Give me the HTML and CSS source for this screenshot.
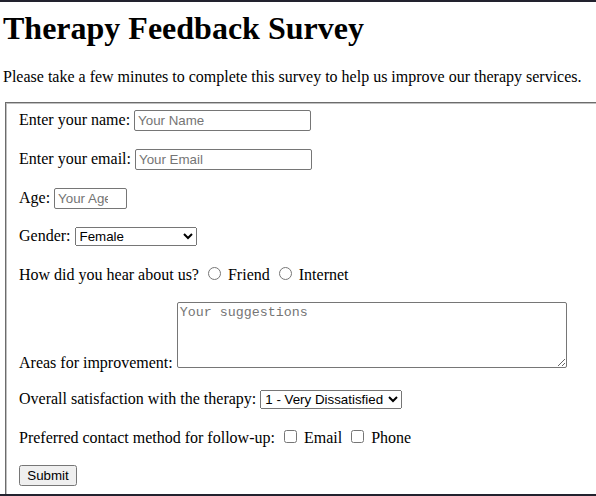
FILE: index.html
```html
<!DOCTYPE html>
<html lang="en">
<head>
<meta charset="utf-8">
<title>Therapy Feedback Survey</title>
<link rel="stylesheet" href="styles.css">
</head>
<body>
<div class="frame"></div>
<div class="page">
  <h1 class="title">Therapy Feedback Survey</h1>
  <p class="intro">Please take a few minutes to complete this survey to help us improve our therapy services.</p>
  <form class="survey">
    <fieldset class="box">
      <div class="row">
        <label for="name">Enter your name:</label>
        <input class="field field-name" type="text" id="name" placeholder="Your Name">
      </div>
      <div class="row">
        <label for="email">Enter your email:</label>
        <input class="field field-name" type="email" id="email" placeholder="Your Email">
      </div>
      <div class="row">
        <label for="age">Age:</label>
        <input class="field field-age" type="text" id="age" placeholder="Your Age">
      </div>
      <div class="row">
        <label for="gender">Gender:</label>
        <select class="pick pick-gender" id="gender">
          <option>Male</option>
          <option selected>Female</option>
          <option>Other</option>
        </select>
      </div>
      <div class="row">
        How did you hear about us?
        <input class="radio" type="radio" name="source" id="friend"> <label for="friend">Friend</label>
        <input class="radio" type="radio" name="source" id="internet"> <label for="internet">Internet</label>
      </div>
      <div class="row">
        <label for="improve">Areas for improvement:</label>
        <textarea class="area" id="improve" placeholder="Your suggestions"></textarea>
      </div>
      <div class="row">
        <label for="sat">Overall satisfaction with the therapy:</label>
        <select class="pick pick-sat" id="sat">
          <option>1 - Very Dissatisfied</option>
          <option>2 - Dissatisfied</option>
          <option>3 - Neutral</option>
          <option>4 - Satisfied</option>
          <option>5 - Very Satisfied</option>
        </select>
      </div>
      <div class="row">
        Preferred contact method for follow-up:
        <input class="check" type="checkbox" id="c-email"> <label for="c-email">Email</label>
        <input class="check" type="checkbox" id="c-phone"> <label for="c-phone">Phone</label>
      </div>
      <div class="row">
        <button class="submit" type="submit">Submit</button>
      </div>
    </fieldset>
  </form>
</div>
</body>
</html>
```
FILE: styles.css
```css
html, body {
  overflow: hidden;
  height: 100%;
}
body {
  margin: 0;
  background: #ffffff;
  color: #000000;
  font-family: "Liberation Serif", "Times New Roman", serif;
  font-size: 16px;
}
.frame {
  position: fixed;
  inset: 0;
  border-top: 2px solid #22222e;
  border-bottom: 2px solid #22222e;
  pointer-events: none;
  z-index: 5;
}
.page {
  width: 640px;
  padding: 0 3px;
}
.title {
  font-size: 32px;
  font-weight: bold;
  margin: 10px 0 21px;
}
.intro {
  margin: 0 0 16px;
  white-space: nowrap;
}
.survey {
  margin: 0;
}
.box {
  margin: 0 2px;
  padding: 6px 12px 10px;
  border: 2px groove #c0c0c0;
  min-height: 420px;
}
.row {
  margin-bottom: 18px;
}
.field, .pick, .submit, .area {
  font-family: "Liberation Sans", Arial, sans-serif;
  font-size: 13.333px;
}
.field {
  height: 21px;
  box-sizing: border-box;
  border: 1px solid #767676;
  border-radius: 2px;
  padding: 1px 3px;
}
.field-name {
  width: 177px;
}
.field-age {
  width: 73px;
  padding-right: 18px;
}
.field::placeholder {
  color: #757575;
}
.pick {
  height: 19px;
  box-sizing: border-box;
  color: #000000;
}
.pick-gender {
  width: 122px;
}
.pick-sat {
  width: 142px;
}
.radio, .check {
  margin: 3px 3px 0 5px;
}
.area {
  font-family: "Liberation Mono", "Courier New", monospace;
  width: 390px;
  height: 66px;
  box-sizing: border-box;
  border: 1px solid #767676;
  border-radius: 2px;
  padding: 2px;
  vertical-align: baseline;
}
.area::placeholder {
  color: #757575;
}
.submit {
  width: 58px;
  height: 21px;
  padding: 1px 6px;
}
```
